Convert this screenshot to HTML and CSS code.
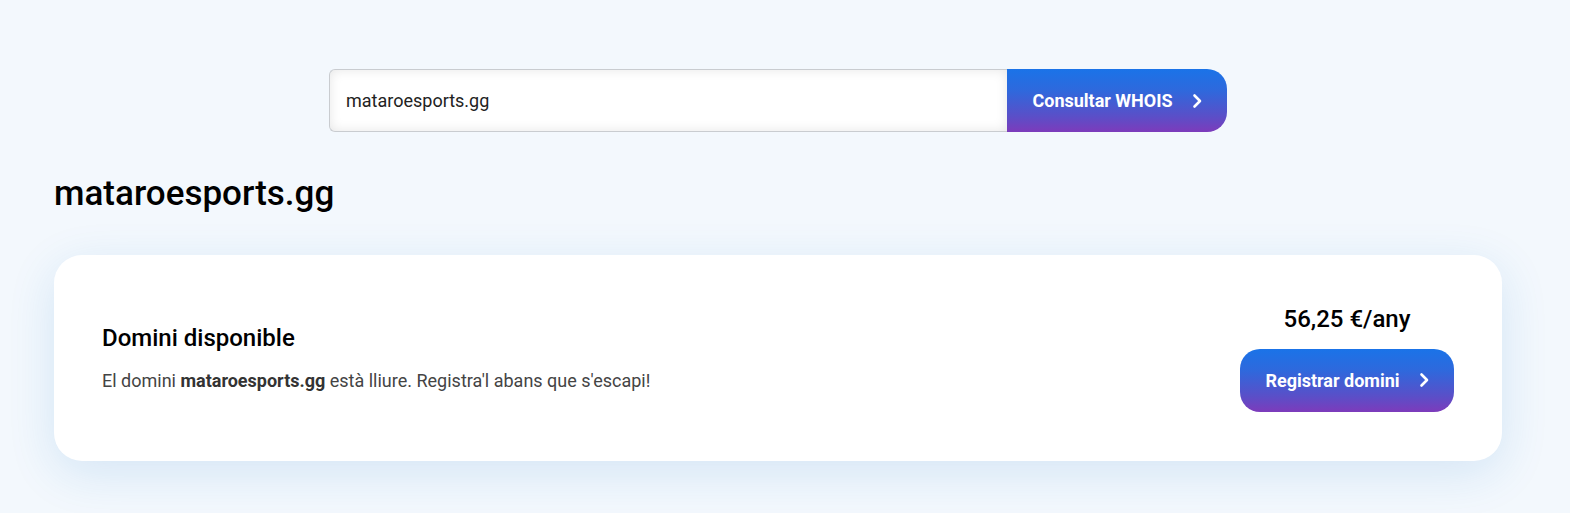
FILE: index.html
```html
<!DOCTYPE html>
<html lang="ca">
<head>
<meta charset="utf-8">
<title>WHOIS</title>
<link rel="stylesheet" href="styles.css">
</head>
<body>
<main class="page">
  <form class="search">
    <input class="search-input" type="text" value="mataroesports.gg">
    <button class="btn btn-search" type="button">Consultar WHOIS
      <svg class="chev" viewBox="0 0 10 16" width="10" height="16"><path d="M2.5 2.5 L8 8 L2.5 13.5" fill="none" stroke="#fff" stroke-width="2.6" stroke-linecap="round" stroke-linejoin="round"/></svg>
    </button>
  </form>
  <h1 class="domain">mataroesports.gg</h1>
  <section class="card">
    <div class="card-info">
      <h2 class="card-title">Domini disponible</h2>
      <p class="card-text">El domini <strong>mataroesports.gg</strong> està lliure. Registra'l abans que s'escapi!</p>
    </div>
    <div class="card-action">
      <div class="price">56,25 €/any</div>
      <button class="btn btn-register" type="button">Registrar domini
        <svg class="chev" viewBox="0 0 10 16" width="10" height="16"><path d="M2.5 2.5 L8 8 L2.5 13.5" fill="none" stroke="#fff" stroke-width="2.6" stroke-linecap="round" stroke-linejoin="round"/></svg>
      </button>
    </div>
  </section>
</main>
</body>
</html>
```
FILE: styles.css
```css
* { box-sizing: border-box; }
html, body { margin: 0; }
body {
  background: #f3f8fd;
  font-family: Roboto, "Noto Sans", Arial, sans-serif;
  color: #000;
  height: 513px;
  overflow: hidden;
}
.page {
  width: 1448px;
  margin-left: 54px;
  padding-top: 69px;
}
.search {
  display: flex;
  width: 898px;
  margin: 0 auto;
  height: 63px;
}
.search-input {
  flex: 1;
  min-width: 0;
  height: 63px;
  border: 1px solid #c9ccd0;
  border-right: none;
  border-radius: 6px 0 0 6px;
  padding: 0 16px;
  font-family: inherit;
  font-size: 18px;
  color: #222;
  background: #fff;
  box-shadow: inset 0 0 12px rgba(0,0,0,0.10);
  outline: none;
}
.btn {
  display: flex;
  align-items: center;
  justify-content: center;
  gap: 19px;
  border: none;
  color: #fff;
  font-family: inherit;
  font-weight: 700;
  font-size: 18px;
  background: linear-gradient(180deg, #1a73e8 0%, #2f68dc 35%, #5a4fc8 75%, #7d3bbb 100%);
  cursor: pointer;
}
.btn-search {
  flex: 0 0 220px;
  height: 63px;
  border-radius: 0 20px 20px 0;
  padding: 0 20px;
}
.chev { display: block; }
.domain {
  margin: 40px 0 0 0;
  font-size: 35px;
  font-weight: 500;
  line-height: 44px;
  letter-spacing: 0;
}
.card {
  margin-top: 39px;
  height: 206px;
  background: #fff;
  border-radius: 28px;
  box-shadow: 0 12px 48px rgba(30, 120, 200, 0.14);
  display: flex;
  align-items: center;
  justify-content: space-between;
  padding: 0 48px;
}
.card-title {
  margin: 0;
  font-size: 24px;
  font-weight: 500;
  line-height: 28px;
}
.card-text {
  margin: 17px 0 0 0;
  font-size: 18px;
  line-height: 24px;
  color: #444;
}
.card-text strong { color: #333; font-weight: 700; }
.card-action {
  display: flex;
  flex-direction: column;
  align-items: center;
  gap: 16px;
}
.price {
  font-size: 24px;
  font-weight: 500;
  line-height: 28px;
}
.btn-register {
  width: 214px;
  height: 63px;
  border-radius: 20px;
  padding: 0 20px;
}
```
